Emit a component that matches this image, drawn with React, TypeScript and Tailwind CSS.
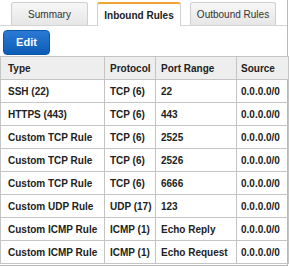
import React from "react";

const rows: [string, string, string, string][] = [
  ["SSH (22)", "TCP (6)", "22", "0.0.0.0/0"],
  ["HTTPS (443)", "TCP (6)", "443", "0.0.0.0/0"],
  ["Custom TCP Rule", "TCP (6)", "2525", "0.0.0.0/0"],
  ["Custom TCP Rule", "TCP (6)", "2526", "0.0.0.0/0"],
  ["Custom TCP Rule", "TCP (6)", "6666", "0.0.0.0/0"],
  ["Custom UDP Rule", "UDP (17)", "123", "0.0.0.0/0"],
  ["Custom ICMP Rule", "ICMP (1)", "Echo Reply", "0.0.0.0/0"],
  ["Custom ICMP Rule", "ICMP (1)", "Echo Request", "0.0.0.0/0"],
];

export default function App() {
  return (
    <div
      className="w-[290px] h-[267px] bg-white overflow-hidden text-[#222]"
      style={{ fontFamily: '"Liberation Sans", Arial, sans-serif' }}
    >
      <div className="w-[288px] h-[266px] border-r border-b border-[#b8b8b8] flex flex-col">
        {/* Tabs */}
        <div className="flex items-end h-[26px] border-b border-[#d4d4d4] pl-[11px] gap-[9px]">
          <div className="w-[77px] h-[23px] flex items-center justify-center rounded-t-[3px] border border-b-0 border-[#cfcfcf] bg-gradient-to-b from-[#f7f7f7] to-[#e6e6e6] text-[10px] text-[#333]">
            Summary
          </div>
          <div className="w-[84px] h-[24px] -mb-px flex items-center justify-center rounded-t-[3px] border border-b-0 border-[#cfcfcf] border-t-2 border-t-[#f2a531] bg-white text-[10px] font-bold text-[#222]">
            Inbound Rules
          </div>
          <div className="w-[86px] h-[23px] flex items-center justify-center rounded-t-[3px] border border-b-0 border-[#cfcfcf] bg-gradient-to-b from-[#f7f7f7] to-[#e6e6e6] text-[10px] text-[#333]">
            Outbound Rules
          </div>
        </div>
        {/* Edit button */}
        <div className="pl-[3px] pt-[4px] pb-[1px]">
          <div className="w-[47px] h-[25px] rounded-[4px] bg-gradient-to-b from-[#2a7ad6] to-[#0b5cb5] border border-[#0a56a8] flex items-center justify-center text-white text-[11px] font-bold">
            Edit
          </div>
        </div>
        {/* Table */}
        <table className="border-collapse text-[10px] font-bold w-[288px] table-fixed">
          <colgroup>
            <col className="w-[104px]" />
            <col className="w-[51px]" />
            <col className="w-[81px]" />
            <col className="w-[52px]" />
          </colgroup>
          <thead>
            <tr className="h-[23px] bg-[#eeeeee]">
              <th className="border border-[#c4c4c4] text-left pl-[7px] font-bold">Type</th>
              <th className="border border-[#c4c4c4] text-left pl-[5px] font-bold">Protocol</th>
              <th className="border border-[#c4c4c4] text-left pl-[5px] font-bold">Port Range</th>
              <th className="border border-[#c4c4c4] text-left pl-[4px] font-bold">Source</th>
            </tr>
          </thead>
          <tbody>
            {rows.map((r, i) => (
              <tr key={i} className="h-[23px]">
                <td className="border border-[#c4c4c4] pl-[7px] whitespace-nowrap">{r[0]}</td>
                <td className="border border-[#c4c4c4] pl-[5px] whitespace-nowrap">{r[1]}</td>
                <td className="border border-[#c4c4c4] pl-[5px] whitespace-nowrap">{r[2]}</td>
                <td className="border border-[#c4c4c4] pl-[4px] whitespace-nowrap">{r[3]}</td>
              </tr>
            ))}
          </tbody>
        </table>
      </div>
    </div>
  );
}
